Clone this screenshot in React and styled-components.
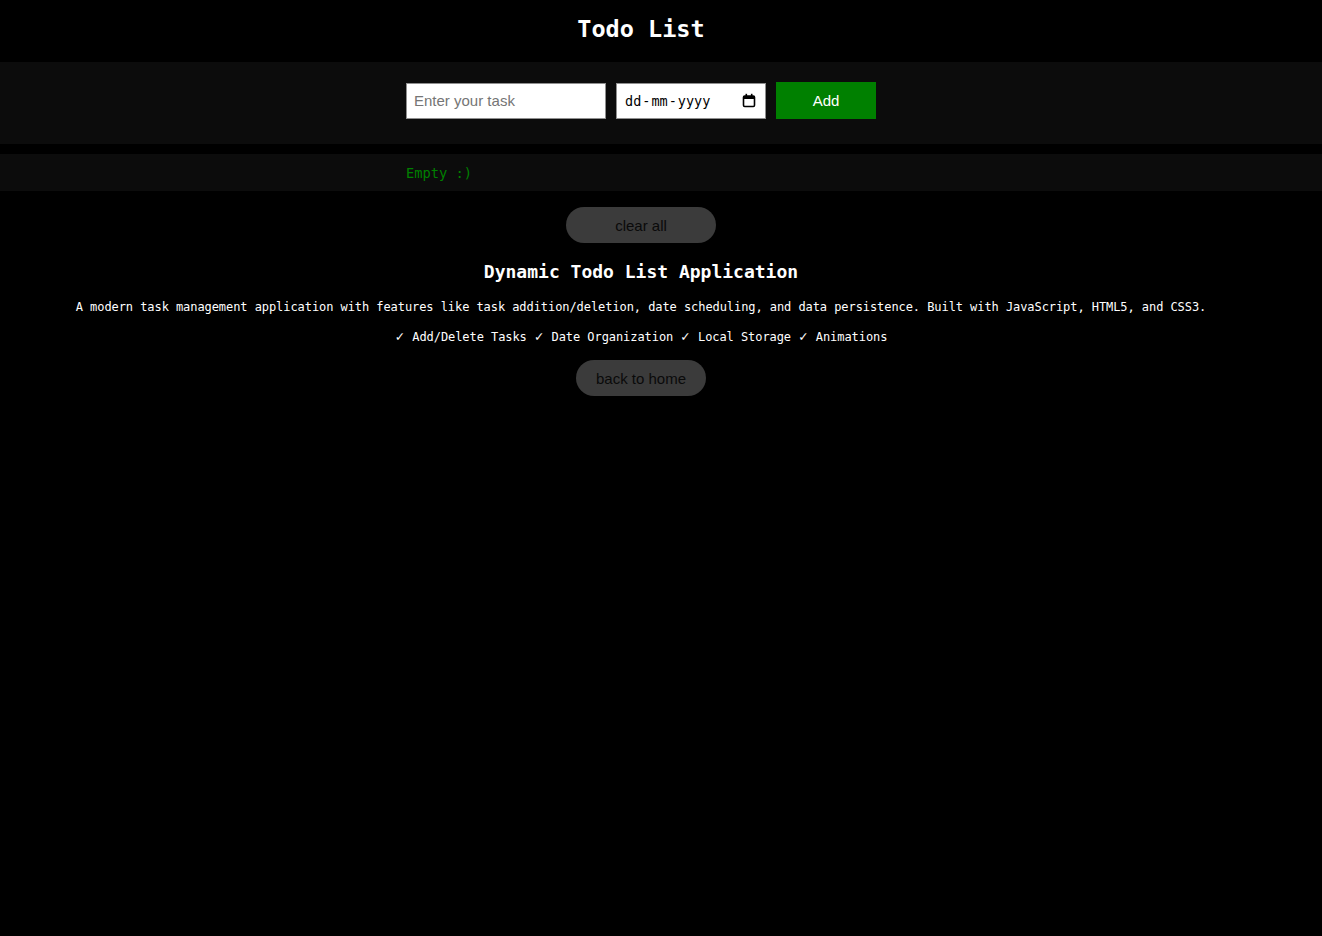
import React from 'react'
import styled, { createGlobalStyle } from 'styled-components'

const Global = createGlobalStyle`
  html, body {
    margin: 0;
    padding: 0;
    background: #000;
    min-height: 100%;
  }
  body {
    font-family: "DejaVu Sans Mono", monospace;
    color: #fff;
  }
`

const Page = styled.div`
  min-height: 936px;
  background: #000;
`

const Inner = styled.div`
  width: 1282px;
  display: flex;
  flex-direction: column;
  align-items: center;
`

const Header = styled.header`
  height: 62px;
  display: flex;
  align-items: center;
  h1 {
    margin: -4px 0 0;
    font-size: 23.5px;
    font-weight: bold;
    color: #fff;
  }
`

const Band = styled.section`
  width: 100%;
  background: #0c0c0c;
  padding: ${p => p.$pad || '0'};
  box-sizing: border-box;
  margin-bottom: ${p => p.$gap || '0'};
`

const Form = styled.div`
  display: flex;
  gap: 10px;
  width: 470px;
  align-items: center;
`

const TaskInput = styled.input`
  width: 200px;
  height: 36px;
  box-sizing: border-box;
  border: 1px solid #8f8f8f;
  background: #fff;
  padding: 0 7px;
  font-family: "Liberation Sans", Arial, sans-serif;
  font-size: 15px;
  outline: none;
  &::placeholder {
    color: #757575;
  }
`

const DateBox = styled.div`
  width: 150px;
  height: 36px;
  box-sizing: border-box;
  border: 1px solid #8f8f8f;
  background: #fff;
  display: flex;
  align-items: center;
  justify-content: space-between;
  padding: 0 9px 0 8px;
  color: #000;
  font-family: "DejaVu Sans Mono", monospace;
  font-size: 13.5px;
  span.sep {
    margin: 0 1px;
  }
`

const AddButton = styled.button`
  width: 100px;
  height: 37px;
  border: none;
  background: #008000;
  color: #fff;
  font-family: "Liberation Sans", Arial, sans-serif;
  font-size: 15px;
  cursor: pointer;
`

const List = styled.ul`
  list-style: none;
  margin: 0 auto;
  padding: 0;
  width: 470px;
  height: 37px;
  display: flex;
  align-items: center;
  li {
    color: #008000;
    font-size: 13.7px;
  }
`

const Pill = styled.button`
  width: ${p => p.$w}px;
  height: 36px;
  border: none;
  border-radius: 18px;
  background: #3b3b3b;
  color: #0a0a0a;
  font-family: "Liberation Sans", Arial, sans-serif;
  font-size: 15px;
  cursor: pointer;
`

const About = styled.div`
  display: flex;
  flex-direction: column;
  align-items: center;
  text-align: center;
  h2 {
    margin: 18px 0 0;
    font-size: 18px;
    font-weight: bold;
    line-height: 22px;
  }
  p {
    margin: 0;
    font-size: 12px;
    letter-spacing: -0.07px;
    line-height: 16px;
  }
  p.desc {
    margin-top: 16px;
  }
  p.features {
    margin-top: 14px;
  }
`

const Check = styled.span`
  font-family: "DejaVu Sans", sans-serif;
  font-size: 12.5px;
  letter-spacing: 0;
`

const Actions = styled.div`
  margin-top: ${p => p.$top || '0'};
`

const CalendarIcon = () => (
  <svg width="14" height="15" viewBox="0 0 14 15" fill="none">
    <rect x="1.5" y="3" width="11" height="10.5" rx="1.2" stroke="#000" strokeWidth="1.6" />
    <rect x="1.5" y="3" width="11" height="3" fill="#000" />
    <rect x="3.5" y="0.8" width="1.6" height="3" fill="#000" />
    <rect x="8.9" y="0.8" width="1.6" height="3" fill="#000" />
  </svg>
)

const features = ['Add/Delete Tasks', 'Date Organization', 'Local Storage', 'Animations']

export default function App() {
  return (
    <Page>
      <Global />
      <Header>
        <Inner>
          <h1>Todo List</h1>
        </Inner>
      </Header>

      <Band $pad="20px 0 25px" $gap="10px">
        <Inner>
          <Form>
            <TaskInput placeholder="Enter your task" />
            <DateBox>
              <span>dd<span className="sep">-</span>mm<span className="sep">-</span>yyyy</span>
              <CalendarIcon />
            </DateBox>
            <AddButton>Add</AddButton>
          </Form>
        </Inner>
      </Band>

      <Band>
        <Inner>
          <List>
            <li>Empty :)</li>
          </List>
        </Inner>
      </Band>

      <Inner>
        <Actions $top="16px">
          <Pill $w={150}>clear all</Pill>
        </Actions>
        <About>
          <h2>Dynamic Todo List Application</h2>
          <p className="desc">
            A modern task management application with features like task addition/deletion, date scheduling, and data persistence. Built with JavaScript, HTML5, and CSS3.
          </p>
          <p className="features">
            {features.map((f, i) => (
              <React.Fragment key={f}>
                {i > 0 && ' '}
                <Check>✓</Check> {f}
              </React.Fragment>
            ))}
          </p>
        </About>
        <Actions $top="15px">
          <Pill $w={130}>back to home</Pill>
        </Actions>
      </Inner>
    </Page>
  )
}
